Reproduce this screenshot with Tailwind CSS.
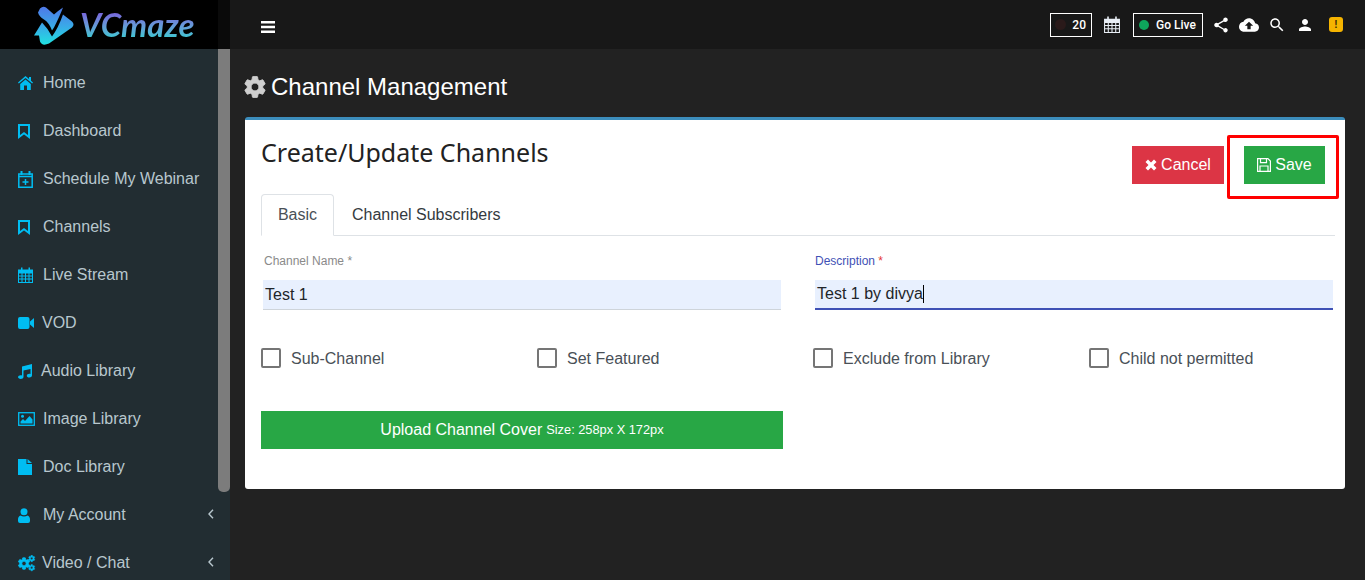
<!DOCTYPE html>
<html lang="en">
<head>
    <meta charset="UTF-8">
    <title>Channel Management</title>
    <script src="https://cdn.jsdelivr.net/npm/@tailwindcss/browser@4"></script>
</head>
<body class="bg-[#222222] font-['Liberation_Sans',sans-serif] overflow-hidden">
<div class="flex h-[580px] w-[1365px] overflow-hidden">

    <!-- Sidebar -->
    <aside class="w-[230px] shrink-0 flex flex-col h-[580px] overflow-hidden">
        <div class="h-[49px] shrink-0 bg-black flex">
            <div class="w-[218px] flex items-center pl-[34px] gap-[4px]">
                <svg width="42" height="42" viewBox="34 3.500 42 42">
                    <defs>
                        <linearGradient id="logoGrad" x1="0" y1="0" x2="0" y2="1">
                            <stop offset="0" stop-color="#4f78e8"/>
                            <stop offset=".5" stop-color="#3aa8e8"/>
                            <stop offset="1" stop-color="#20e0e0"/>
                        </linearGradient>
                    </defs>
                    <path fill="url(#logoGrad)" d="M40 8Q43 5 46 7L54 14Q57 11 63 7 60 15 54 27L52 30Q49 22 44 19 39 16 38 12ZM63 14 72 21Q75 24 72 27L49 43Q42 46 40 41L39 35 34 35 42 22Q48 28 52 36 58 28 63 14Z"/>
                </svg>
                <span class="text-[33px] leading-none italic font-bold font-['Lato',sans-serif] bg-gradient-to-b from-[#7b4fdc] to-[#1fd0cf] bg-clip-text text-transparent">VCmaze</span>
            </div>
            <div class="w-[12px] bg-[#0a0a0a]"></div>
        </div>
        <div class="flex flex-1 bg-[#222d32] overflow-hidden">
            <nav class="w-[218px] shrink-0 pt-[10px] text-[16px] text-[#b8c7ce]">
                <a class="flex items-center h-[48px] pl-[18px]">
                    <svg class="w-[15px] h-[14px] mr-[10px] text-[#00bdf2]" viewBox="0 0 15 14" fill="currentColor"><path d="M7.500 0 11 3V1h2v3.800l2 1.800-.8 1L7.500 1.900.8 7.600 0 6.600zM2.200 8 7.500 3.400 12.800 8v6H9V9.500H6V14H2.200z"/></svg>
                    <span>Home</span>
                </a>
                <a class="flex items-center h-[48px] pl-[18px]">
                    <svg class="w-[12px] h-[15px] mr-[13px] text-[#00bdf2]" viewBox="0 0 12 15" fill="none" stroke="currentColor" stroke-width="2"><path d="M1 1h10v12L6 9.300 1 13z"/></svg>
                    <span>Dashboard</span>
                </a>
                <a class="flex items-center h-[48px] pl-[18px]">
                    <svg class="w-[15px] h-[17px] mr-[10px] text-[#00bdf2]" viewBox="0 0 15 17" fill="none" stroke="currentColor" stroke-width="1.500"><path d="M.8 3h13.400v13.200H.8zM.8 5.500h13.400" /><path stroke-width="2" d="M3.500 0v4M11.500 0v4"/><path d="M4.500 11h6M7.500 8v6"/></svg>
                    <span>Schedule My Webinar</span>
                </a>
                <a class="flex items-center h-[48px] pl-[18px]">
                    <svg class="w-[12px] h-[15px] mr-[13px] text-[#00bdf2]" viewBox="0 0 12 15" fill="none" stroke="currentColor" stroke-width="2"><path d="M1 1h10v12L6 9.300 1 13z"/></svg>
                    <span>Channels</span>
                </a>
                <a class="flex items-center h-[48px] pl-[18px]">
                    <svg class="w-[15px] h-[16px] mr-[10px] text-[#00bdf2]" viewBox="0 0 15 16" fill="currentColor"><path d="M0 2.500h3V.5h1.500v2h6V.5H12v2h3V16H0zM1 6.500v2h2.500v-2zm3.500 0v2H7v-2zm3.500 0v2h2.500v-2zm3.500 0v2H14v-2zM1 9.500v2h2.500v-2zm3.500 0v2H7v-2zm3.500 0v2h2.500v-2zm3.500 0v2H14v-2zM1 12.500V15h2.500v-2.500zm3.500 0V15H7v-2.500zm3.500 0V15h2.500v-2.500zm3.500 0V15H14v-2.500z"/></svg>
                    <span>Live Stream</span>
                </a>
                <a class="flex items-center h-[48px] pl-[18px]">
                    <svg class="w-[16px] h-[12px] mr-[8px] text-[#00bdf2]" viewBox="0 0 16 12" fill="currentColor"><path d="M2 0h7.500a2 2 0 0 1 2 2v8a2 2 0 0 1-2 2H2a2 2 0 0 1-2-2V2a2 2 0 0 1 2-2zM12 4.500 16 1v10l-4-3.500z"/></svg>
                    <span>VOD</span>
                </a>
                <a class="flex items-center h-[48px] pl-[18px]">
                    <svg class="w-[14px] h-[15px] mr-[9px] text-[#00bdf2]" viewBox="0 0 14 15" fill="currentColor"><path d="M4 2.500 14 0v11.500c0 1.300-1.300 2-2.700 2s-2.500-.7-2.500-1.800 1.200-1.900 2.500-1.900c.4 0 .9.100 1.200.2V5L5.500 6.600V13c0 1.200-1.300 2-2.800 2S0 14.200 0 13.100s1.300-1.900 2.700-1.900c.5 0 .9.100 1.300.2z"/></svg>
                    <span>Audio Library</span>
                </a>
                <a class="flex items-center h-[48px] pl-[18px]">
                    <svg class="w-[17px] h-[14px] mr-[8px] text-[#00bdf2]" viewBox="0 0 17 14"><rect x=".7" y=".7" width="15.600" height="12.600" fill="none" stroke="currentColor" stroke-width="1.300"/><path fill="currentColor" d="M2.500 11.500V9.500L5 7l2 2 4.500-5 3 3.500v4z"/><circle fill="currentColor" cx="4.500" cy="4.200" r="1.500"/></svg>
                    <span>Image Library</span>
                </a>
                <a class="flex items-center h-[48px] pl-[18px]">
                    <svg class="w-[14px] h-[16px] mr-[11px] text-[#00bdf2]" viewBox="0 0 14 16" fill="currentColor"><path d="M0 0h8.500v5H14v11H0zM9.500 0 14 4H9.500z"/></svg>
                    <span>Doc Library</span>
                </a>
                <a class="flex items-center h-[48px] pl-[18px] pr-[2px]">
                    <svg class="w-[12px] h-[15px] mr-[13px] text-[#00bdf2]" viewBox="0 0 12 15" fill="currentColor"><circle cx="6" cy="3.700" r="3.500"/><path d="M2.500 7.500c2 1.300 5 1.300 7 0 1.500.6 2.500 2 2.500 4V13a2 2 0 0 1-2 2H2a2 2 0 0 1-2-2v-1.500c0-2 1-3.400 2.500-4z"/></svg>
                    <span>My Account</span>
                    <svg class="ml-auto mr-[2px] -mt-[3px] w-[6px] h-[10px] text-[#b8c7ce]" viewBox="0 0 6 10" fill="none" stroke="currentColor" stroke-width="1.400"><path d="M5 .8 1 5l4 4.200"/></svg>
                </a>
                <a class="flex items-center h-[48px] pl-[18px] pr-[2px]">
                    <svg class="w-[18px] h-[17px] mr-[6px] text-[#00bdf2]" viewBox="0 0 18 17" fill="currentColor" stroke="currentColor">
                        <path stroke-width="1.200" transform="translate(-1.200 1.300) scale(.6)" d="M19.140 12.940c.04-.3.06-.61.06-.94 0-.32-.02-.64-.07-.94l2.030-1.580c.18-.14.23-.41.12-.61l-1.920-3.320c-.12-.22-.37-.29-.59-.22l-2.390.96c-.5-.38-1.030-.7-1.620-.94l-.36-2.540c-.04-.24-.24-.41-.48-.41h-3.840c-.24 0-.43.17-.47.41l-.36 2.540c-.59.24-1.130.57-1.620.94l-2.390-.96c-.22-.08-.47 0-.59.22L2.740 8.870c-.12.21-.08.47.12.61l2.030 1.580c-.05.3-.09.63-.09.94s.02.64.07.94l-2.030 1.580c-.18.14-.23.41-.12.61l1.920 3.320c.12.22.37.29.59.22l2.390-.96c.5.38 1.030.7 1.620.94l.36 2.540c.05.24.24.41.48.41h3.840c.24 0 .44-.17.47-.41l.36-2.540c.59-.24 1.130-.56 1.620-.94l2.390.96c.22.08.47 0 .59-.22l1.920-3.320c.12-.22.07-.47-.12-.61l-2.010-1.580zM12 15.600c-1.980 0-3.600-1.620-3.600-3.600s1.620-3.600 3.600-3.600 3.600 1.620 3.600 3.600-1.620 3.600-3.600 3.600z"/>
                        <path stroke-width="1.200" transform="translate(9.740 -.46) scale(.33)" d="M19.140 12.940c.04-.3.06-.61.06-.94 0-.32-.02-.64-.07-.94l2.030-1.580c.18-.14.23-.41.12-.61l-1.920-3.320c-.12-.22-.37-.29-.59-.22l-2.390.96c-.5-.38-1.030-.7-1.620-.94l-.36-2.540c-.04-.24-.24-.41-.48-.41h-3.840c-.24 0-.43.17-.47.41l-.36 2.540c-.59.24-1.130.57-1.620.94l-2.390-.96c-.22-.08-.47 0-.59.22L2.740 8.870c-.12.21-.08.47.12.61l2.030 1.580c-.05.3-.09.63-.09.94s.02.64.07.94l-2.030 1.580c-.18.14-.23.41-.12.61l1.920 3.320c.12.22.37.29.59.22l2.390-.96c.5.38 1.030.7 1.620.94l.36 2.540c.05.24.24.41.48.41h3.840c.24 0 .44-.17.47-.41l.36-2.540c.59-.24 1.130-.56 1.620-.94l2.390.96c.22.08.47 0 .59-.22l1.920-3.320c.12-.22.07-.47-.12-.61l-2.010-1.580zM12 15.600c-1.980 0-3.600-1.620-3.600-3.600s1.620-3.600 3.600-3.600 3.600 1.620 3.600 3.600-1.620 3.600-3.600 3.600z"/>
                        <path stroke-width="1.200" transform="translate(9.740 8.740) scale(.33)" d="M19.140 12.940c.04-.3.06-.61.06-.94 0-.32-.02-.64-.07-.94l2.030-1.580c.18-.14.23-.41.12-.61l-1.920-3.320c-.12-.22-.37-.29-.59-.22l-2.390.96c-.5-.38-1.030-.7-1.620-.94l-.36-2.540c-.04-.24-.24-.41-.48-.41h-3.840c-.24 0-.43.17-.47.41l-.36 2.540c-.59.24-1.130.57-1.620.94l-2.390-.96c-.22-.08-.47 0-.59.22L2.740 8.870c-.12.21-.08.47.12.61l2.030 1.580c-.05.3-.09.63-.09.94s.02.64.07.94l-2.030 1.580c-.18.14-.23.41-.12.61l1.920 3.320c.12.22.37.29.59.22l2.390-.96c.5.38 1.030.7 1.620.94l.36 2.540c.05.24.24.41.48.41h3.840c.24 0 .44-.17.47-.41l.36-2.540c.59-.24 1.130-.56 1.620-.94l2.390.96c.22.08.47 0 .59-.22l1.920-3.320c.12-.22.07-.47-.12-.61l-2.010-1.580zM12 15.600c-1.980 0-3.600-1.620-3.600-3.600s1.620-3.600 3.600-3.600 3.600 1.620 3.600 3.600-1.620 3.600-3.600 3.600z"/>
                    </svg>
                    <span>Video / Chat</span>
                    <svg class="ml-auto mr-[2px] -mt-[3px] w-[6px] h-[10px] text-[#b8c7ce]" viewBox="0 0 6 10" fill="none" stroke="currentColor" stroke-width="1.400"><path d="M5 .8 1 5l4 4.200"/></svg>
                </a>
            </nav>
            <div class="w-[12px] shrink-0 bg-[#222d32]">
                <div class="h-[443px] bg-[#7c7c7c] rounded-b-[5px]"></div>
            </div>
        </div>
    </aside>

    <!-- Main column -->
    <div class="flex-1 flex flex-col min-w-0">
        <header class="h-[49px] shrink-0 bg-[#181818] flex items-center pl-[31px] text-white">
            <svg class="w-[14px] h-[12px] mt-[5px]" viewBox="0 0 14 12" fill="currentColor"><path d="M0 0h14v2.500H0zM0 4.700h14v2.500H0zM0 9.500h14V12H0z"/></svg>
            <div class="ml-auto flex items-center pr-[22px] h-full">
                <div class="w-[42px] h-[24px] border border-white flex items-center justify-between pl-[4px] pr-[5px] text-[12px] font-medium font-['Roboto',sans-serif]">
                    <span class="w-[11px] h-[11px] rounded-full bg-[#2a1a1a]"></span>
                    <span>20</span>
                </div>
                <svg class="ml-[12px] w-[16px] h-[17px] text-[#e8eef5]" viewBox="0 0 15 16" fill="currentColor"><path d="M0 2.500h3V.5h1.500v2h6V.5H12v2h3V16H0zM1 6.500v2h2.500v-2zm3.500 0v2H7v-2zm3.500 0v2h2.500v-2zm3.500 0v2H14v-2zM1 9.500v2h2.500v-2zm3.500 0v2H7v-2zm3.500 0v2h2.500v-2zm3.500 0v2H14v-2zM1 12.500V15h2.500v-2.500zm3.500 0V15H7v-2.500zm3.500 0V15h2.500v-2.500zm3.500 0V15H14v-2.500z"/></svg>
                <div class="ml-[13px] w-[70px] h-[24px] border border-white flex items-center pl-[5px] text-[12px] font-medium font-['Roboto',sans-serif]">
                    <span class="w-[10px] h-[10px] rounded-full bg-[#0ea55c] mr-[7px]"></span>
                    <span>Go Live</span>
                </div>
                <svg class="ml-[9px] w-[18px] h-[18px]" viewBox="0 0 24 24" fill="currentColor"><path d="M18 16.080c-.76 0-1.440.3-1.960.77L8.910 12.700c.05-.23.09-.46.09-.7s-.04-.47-.09-.7l7.050-4.110c.54.5 1.250.81 2.040.81 1.660 0 3-1.340 3-3s-1.340-3-3-3-3 1.340-3 3c0 .24.04.47.09.7L8.040 9.810C7.500 9.310 6.790 9 6 9c-1.660 0-3 1.340-3 3s1.340 3 3 3c.79 0 1.500-.31 2.040-.81l7.120 4.160c-.05.21-.08.43-.08.65 0 1.610 1.310 2.920 2.920 2.920s2.920-1.310 2.920-2.920-1.310-2.920-2.920-2.920z"/></svg>
                <svg class="ml-[9px] w-[20px] h-[20px]" viewBox="0 0 24 24" fill="currentColor"><path d="M19.350 10.040C18.670 6.590 15.640 4 12 4 9.110 4 6.600 5.640 5.350 8.040 2.340 8.360 0 10.910 0 14c0 3.310 2.690 6 6 6h13c2.760 0 5-2.240 5-5 0-2.640-2.050-4.780-4.650-4.960zM14 13v4h-4v-4H7l5-5 5 5h-3z"/></svg>
                <svg class="ml-[9px] w-[18px] h-[18px]" viewBox="0 0 24 24" fill="currentColor"><path d="M15.500 14h-.79l-.28-.27C15.410 12.590 16 11.110 16 9.500 16 5.910 13.090 3 9.500 3S3 5.910 3 9.500 5.910 16 9.500 16c1.610 0 3.090-.59 4.230-1.570l.27.28v.79l5 4.990L20.490 19l-4.990-5zm-6 0C7.010 14 5 11.990 5 9.500S7.010 5 9.500 5 14 7.010 14 9.500 11.990 14 9.500 14z"/></svg>
                <svg class="ml-[10px] w-[18px] h-[18px]" viewBox="0 0 24 24" fill="currentColor"><path d="M12 12c2.210 0 4-1.790 4-4s-1.790-4-4-4-4 1.790-4 4 1.790 4 4 4zm0 2c-2.670 0-8 1.340-8 4v2h16v-2c0-2.660-5.330-4-8-4z"/></svg>
                <div class="ml-[15px] w-[14px] h-[15px] rounded-[3px] bg-[#f5b400] flex items-center justify-center text-[10px] font-bold text-[#3a2b00]">!</div>
            </div>
        </header>

        <main class="px-[15px] pt-[24px]">
            <h1 class="flex items-center h-[28px] text-[24px] leading-none text-white">
                <svg class="w-[26px] h-[26px] -ml-[3px] mr-[3px] text-[#cfcfcf]" viewBox="0 0 24 24" fill="currentColor" stroke="currentColor" stroke-width=".8"><path d="M19.140 12.940c.04-.3.06-.61.06-.94 0-.32-.02-.64-.07-.94l2.030-1.580c.18-.14.23-.41.12-.61l-1.920-3.320c-.12-.22-.37-.29-.59-.22l-2.390.96c-.5-.38-1.030-.7-1.620-.94l-.36-2.540c-.04-.24-.24-.41-.48-.41h-3.840c-.24 0-.43.17-.47.41l-.36 2.540c-.59.24-1.130.57-1.620.94l-2.390-.96c-.22-.08-.47 0-.59.22L2.740 8.870c-.12.21-.08.47.12.61l2.030 1.580c-.05.3-.09.63-.09.94s.02.64.07.94l-2.030 1.580c-.18.14-.23.41-.12.61l1.920 3.320c.12.22.37.29.59.22l2.390-.96c.5.38 1.030.7 1.620.94l.36 2.540c.05.24.24.41.48.41h3.840c.24 0 .44-.17.47-.41l.36-2.540c.59-.24 1.130-.56 1.620-.94l2.390.96c.22.08.47 0 .59-.22l1.920-3.320c.12-.22.07-.47-.12-.61l-2.010-1.580zM12 15.600c-1.980 0-3.600-1.620-3.600-3.600s1.620-3.600 3.600-3.600 3.600 1.620 3.600 3.600-1.620 3.600-3.600 3.600z"/></svg>
                <span>Channel Management</span>
            </h1>

            <section class="relative mt-[16px] w-[1100px] h-[372px] bg-white border-t-[3px] border-[#3c8dbc] rounded-[3px] pl-[16px] pr-[10px]">
                <div class="flex items-start h-[74px]">
                    <h2 class="pt-[14px] text-[25px] leading-[36px] text-[#222] font-['Noto_Sans',sans-serif]">Create/Update Channels</h2>
                    <div class="ml-auto mt-[26px] mr-[10px] flex gap-[20px] text-white text-[16px]">
                        <button class="w-[92px] h-[38px] bg-[#dc3545] flex items-center justify-center gap-[4px]">
                            <svg class="w-[12px] h-[12px]" viewBox="0 0 12 12" fill="currentColor"><path d="M3 .5 6 3.500 9 .5 11.500 3 8.500 6l3 3L9 11.500l-3-3-3 3L.5 9l3-3-3-3z"/></svg>
                            <span>Cancel</span>
                        </button>
                        <button class="w-[81px] h-[38px] bg-[#28a745] flex items-center justify-center gap-[4px]">
                            <svg class="w-[14px] h-[14px]" viewBox="0 0 14 14" fill="none" stroke="currentColor" stroke-width="1.200"><path d="M.6.6h10.300l2.500 2.500v10.300H.6zM3.500.6v4h6v-4M3 13.400V8h8v5.400"/></svg>
                            <span>Save</span>
                        </button>
                    </div>
                </div>

                <div class="flex h-[42px] border-b border-[#dee2e6] text-[16px] leading-[24px]">
                    <div class="w-[73px] h-[42px] bg-white border border-[#dee2e6] border-b-white rounded-t-[4px] flex items-center justify-center text-[#495057]">Basic</div>
                    <div class="pl-[18px] pt-[9px] text-[#343a40]">Channel Subscribers</div>
                </div>

                <div class="flex pl-[2px] pt-[17px] gap-[34px]">
                    <div class="w-[518px]">
                        <div class="h-[16px] text-[12px] leading-[16px] text-[#8a8a8a] pl-[1px]">Channel Name *</div>
                        <div class="mt-[11px] h-[30px] bg-[#e8f0fe] border-b border-[#ced4da] pl-[2px] text-[16px] leading-[30px] text-[#212529]">Test 1</div>
                    </div>
                    <div class="w-[518px]">
                        <div class="h-[16px] text-[12px] leading-[16px] text-[#3f51b5]">Description <span class="text-[#e53935]">*</span></div>
                        <div class="mt-[11px] h-[30px] bg-[#e8f0fe] border-b-2 border-[#3f51b5] pl-[2px] text-[16px] leading-[30px] text-[#212529] flex items-center">Test 1 by divya<span class="w-px h-[18px] bg-black"></span></div>
                    </div>
                </div>

                <div class="grid grid-cols-[276px_276px_276px_276px] mt-[38px] text-[16px] leading-[22px] text-[#495057]">
                    <label class="flex items-center h-[20px] gap-[10px]"><span class="w-[20px] h-[20px] border-2 border-[#757575] rounded-[2px]"></span><span class="pt-[2px]">Sub-Channel</span></label>
                    <label class="flex items-center h-[20px] gap-[10px]"><span class="w-[20px] h-[20px] border-2 border-[#757575] rounded-[2px]"></span><span class="pt-[2px]">Set Featured</span></label>
                    <label class="flex items-center h-[20px] gap-[10px]"><span class="w-[20px] h-[20px] border-2 border-[#757575] rounded-[2px]"></span><span class="pt-[2px]">Exclude from Library</span></label>
                    <label class="flex items-center h-[20px] gap-[10px]"><span class="w-[20px] h-[20px] border-2 border-[#757575] rounded-[2px]"></span><span class="pt-[2px]">Child not permitted</span></label>
                </div>

                <button class="mt-[43px] w-[522px] h-[38px] bg-[#28a745] text-white text-[16px] flex items-center justify-center gap-[4px]">
                    <span>Upload Channel Cover</span><span class="text-[12.800px]">Size: 258px X 172px</span>
                </button>

                <!-- red highlight round Save -->
                <div class="absolute left-[982px] top-[15px] w-[112px] h-[64px] border-[3px] border-[#ff0000] rounded-[2px]"></div>
            </section>
        </main>
    </div>
</div>
</body>
</html>
